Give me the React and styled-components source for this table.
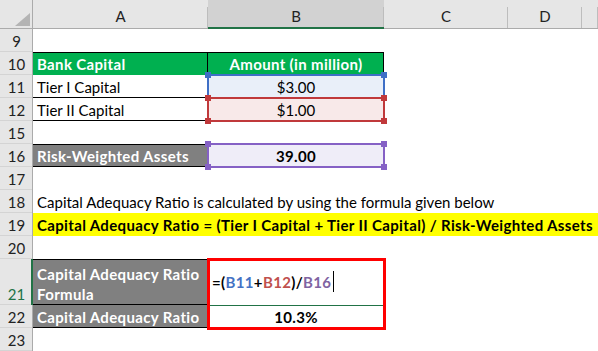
import React from 'react';
import styled, { createGlobalStyle } from 'styled-components';

const GlobalStyle = createGlobalStyle`
  html, body {
    margin: 0;
    padding: 0;
    background: #fff;
    overflow: hidden;
  }
`;

const Sheet = styled.div`
  width: 598px;
  height: 351px;
  overflow: hidden;
  font-family: Lato, 'Open Sans', sans-serif;
  font-size: 15px;
  color: #000;
`;

const Row = styled.div`
  display: grid;
  grid-template-columns: 33px 175px 176px 124px 74px 16px;
  height: ${(p) => p.$h || 23}px;
`;

const Corner = styled.div`
  background: #e6e6e6;
  box-shadow: inset -1px 0 0 #ababab, inset 0 -1px 0 #ababab;
  display: flex;
  justify-content: flex-end;
  align-items: flex-end;
  padding: 0 3px 3px 0;

  &::after {
    content: '';
    width: 15px;
    height: 13px;
    background: #b4b4b4;
    clip-path: polygon(100% 0, 100% 100%, 0 100%);
  }
`;

const ColHead = styled.div`
  background: linear-gradient(#bdbdbd, #bdbdbd) right bottom / 1px 22px no-repeat,
    ${(p) => (p.$active ? '#d2d2d2' : '#e6e6e6')};
  box-shadow: ${(p) =>
    p.$active ? 'inset 0 -2px 0 #217346' : 'inset 0 -1px 0 #ababab'};
  display: flex;
  align-items: center;
  justify-content: center;
  padding-top: 2px;
  color: #222;
`;

const RowHead = styled.div`
  background: #e6e6e6;
  box-shadow: ${(p) =>
      p.$active ? 'inset -2px 0 0 #217346' : 'inset -1px 0 0 #ababab'},
    inset 0 -1px 0 #d4d4d4;
  display: flex;
  align-items: flex-end;
  justify-content: center;
  padding-bottom: 1px;
  line-height: 20px;
  color: ${(p) => (p.$active ? '#217346' : '#222')};
`;

const edges = ({ $top, $bottom, $right }) => {
  const s = [];
  if ($top) s.push(`inset 0 1px 0 ${$top}`);
  if ($bottom) s.push(`inset 0 -1px 0 ${$bottom}`);
  if ($right) s.push(`inset -1px 0 0 ${$right}`);
  return s.length ? s.join(', ') : 'none';
};

const Cell = styled.div`
  position: relative;
  display: flex;
  align-items: ${(p) => p.$valign || 'flex-end'};
  justify-content: ${(p) =>
    p.$align === 'center' ? 'center' : 'flex-start'};
  padding: 0 4px 1px;
  line-height: 20px;
  white-space: ${(p) => (p.$wrap ? 'normal' : 'nowrap')};
  background: ${(p) => p.$bg || 'transparent'};
  color: ${(p) => p.$color || '#000'};
  font-weight: ${(p) => (p.$bold ? 700 : 400)};
  letter-spacing: ${(p) => (p.$bold ? '0.35px' : 'normal')};
  box-shadow: ${edges};
  grid-column: ${(p) => (p.$span ? `span ${p.$span}` : 'auto')};
  ${(p) => (p.$width ? `width: ${p.$width}px; justify-self: start;` : '')}
`;

const Range = styled.div`
  position: absolute;
  top: -1px;
  left: -1px;
  right: -1px;
  bottom: -1px;
  border: 2px solid ${(p) => p.$color};
  z-index: 1;
  pointer-events: none;
`;

const Handle = styled.span`
  position: absolute;
  width: 6px;
  height: 6px;
  background: ${(p) => p.$color};
  ${(p) => (p.$y === 'top' ? 'top: -4px;' : 'bottom: -4px;')}
  ${(p) => (p.$x === 'left' ? 'left: -4px;' : 'right: -4px;')}
`;

const FocusBox = styled.div`
  position: absolute;
  top: -1px;
  left: -1px;
  right: -2px;
  bottom: -25px;
  border: 3px solid #ff0000;
  z-index: 2;
  pointer-events: none;
`;

const Ref = styled.span`
  color: ${(p) => p.$color};
`;

const Caret = styled.span`
  display: inline-block;
  width: 1px;
  height: 21px;
  background: #000;
  margin-left: 2px;
  vertical-align: middle;
`;

const Formula = styled.span`
  display: inline-flex;
  align-items: center;
`;

const RangeMark = ({ color }) => (
  <Range $color={color}>
    <Handle $color={color} $x="left" $y="top" />
    <Handle $color={color} $x="right" $y="top" />
    <Handle $color={color} $x="left" $y="bottom" />
    <Handle $color={color} $x="right" $y="bottom" />
  </Range>
);

const Blank = ({ n, h }) => (
  <Row $h={h}>
    <RowHead>{n}</RowHead>
  </Row>
);

export default function App() {
  return (
    <Sheet>
      <GlobalStyle />
      <Row $h={29}>
        <Corner />
        <ColHead>A</ColHead>
        <ColHead $active>B</ColHead>
        <ColHead>C</ColHead>
        <ColHead>D</ColHead>
        <ColHead />
      </Row>
      <Blank n={9} />
      <Row>
        <RowHead>10</RowHead>
        <Cell $bg="#00b050" $color="#fff" $bold $top="#000" $right="#000">
          Bank Capital
        </Cell>
        <Cell $bg="#00b050" $color="#fff" $bold $align="center" $top="#000" $right="#000">
          Amount (in million)
        </Cell>
      </Row>
      <Row>
        <RowHead>11</RowHead>
        <Cell $bottom="#000">Tier I Capital</Cell>
        <Cell $bg="#e9eff9" $align="center">
          $3.00
          <RangeMark color="#3f6fc6" />
        </Cell>
      </Row>
      <Row>
        <RowHead>12</RowHead>
        <Cell $bottom="#000">Tier II Capital</Cell>
        <Cell $bg="#f8e9e9" $align="center">
          $1.00
          <RangeMark color="#c0393b" />
        </Cell>
      </Row>
      <Blank n={15} />
      <Row>
        <RowHead>16</RowHead>
        <Cell $bg="#808080" $color="#fff" $bold $top="#000" $bottom="#000" $right="#000">
          Risk-Weighted Assets
        </Cell>
        <Cell $bg="#efedf8" $bold $align="center">
          39.00
          <RangeMark color="#8561c5" />
        </Cell>
      </Row>
      <Blank n={17} />
      <Row>
        <RowHead>18</RowHead>
        <Cell $span={5}>
          Capital Adequacy Ratio is calculated by using the formula given below
        </Cell>
      </Row>
      <Row>
        <RowHead>19</RowHead>
        <Cell $span={5} $bg="#ffff00" $bold $width={560}>
          Capital Adequacy Ratio = (Tier I Capital + Tier II Capital) / Risk-Weighted Assets
        </Cell>
      </Row>
      <Blank n={20} />
      <Row $h={46}>
        <RowHead $active>21</RowHead>
        <Cell $bg="#808080" $color="#fff" $bold $wrap $top="#000" $bottom="#000">
          Capital Adequacy Ratio Formula
        </Cell>
        <Cell $valign="center" $bold>
          <Formula>
            =(<Ref $color="#4472c4">B11</Ref>+<Ref $color="#c0504d">B12</Ref>)/
            <Ref $color="#8064a2">B16</Ref>
            <Caret />
          </Formula>
          <FocusBox />
        </Cell>
      </Row>
      <Row>
        <RowHead>22</RowHead>
        <Cell $bg="#808080" $color="#fff" $bold $bottom="#000">
          Capital Adequacy Ratio
        </Cell>
        <Cell $bold $align="center" $top="#217346">
          10.3%
        </Cell>
      </Row>
      <Blank n={23} />
    </Sheet>
  );
}
